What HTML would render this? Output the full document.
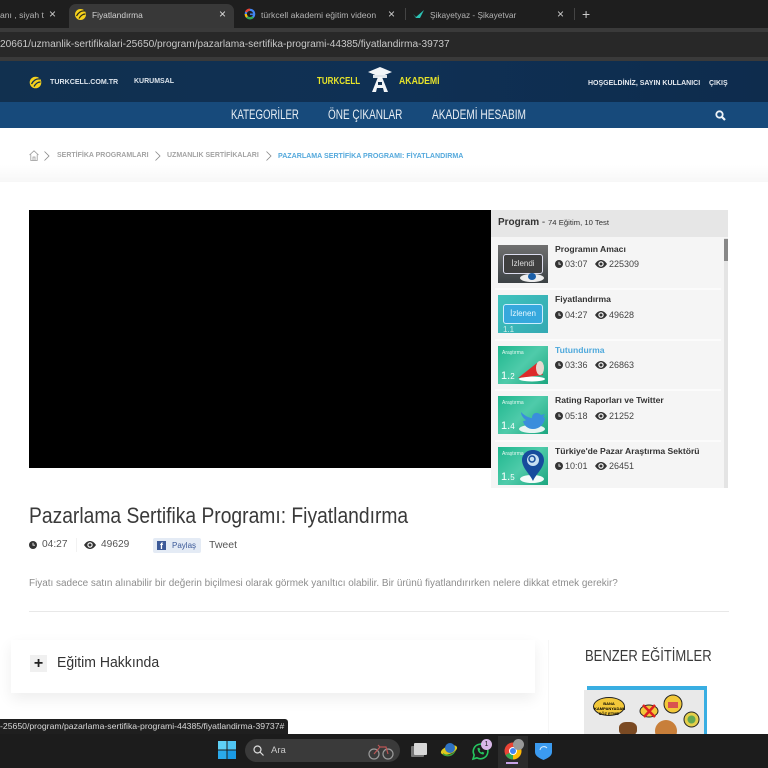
<!DOCTYPE html>
<html lang="tr"><head><meta charset="utf-8"><title>Fiyatlandırma</title>
<style>
html,body{margin:0;padding:0;background:#fff}
body{width:768px;height:768px;overflow:hidden;position:relative;font-family:"Liberation Sans",sans-serif}
.a{position:absolute;white-space:nowrap}
svg{position:absolute;overflow:visible}
.t{font-size:8.6px;color:#333;font-weight:bold;left:555px}
.m{font-size:9px;color:#444}
.th{position:absolute;left:498px;width:50px;height:38px;overflow:hidden}
</style></head><body>

<!-- browser tabs -->
<div class="a" style="left:0;top:0;width:768px;height:28px;background:#1e1e1e"></div>
<div class="a" style="left:69px;top:4px;width:165px;height:24px;background:#383838;border-radius:7px 7px 0 0"></div>
<div class="a" style="left:0;top:28px;width:768px;height:4px;background:#3a3a3a"></div>
<div class="a" style="left:0;top:32px;width:768px;height:25px;background:#282828"></div>
<div class="a" style="left:0;top:57px;width:768px;height:4px;background:#3a3a3a"></div>
<div class="a" style="left:0;top:10px;font-size:8.6px;color:#b4b4b4">anı , siyah t</div>
<div class="a" style="left:49px;top:7px;font-size:12px;color:#ccc">×</div>
<svg style="left:74px;top:8px" width="13" height="13" viewBox="0 0 13 13"><circle cx="6.5" cy="6.5" r="5.5" fill="#f6d21c"/><path d="M2.5 8 C5 3.5 8 2.5 11 3 M5 10.500 C7 7 9 6 11.500 6" stroke="#29281a" stroke-width="1.2" fill="none"/></svg>
<div class="a" style="left:92px;top:10px;font-size:8.4px;color:#d2d2d2">Fiyatlandırma</div>
<div class="a" style="left:219px;top:7px;font-size:12px;color:#ddd">×</div>
<svg style="left:244px;top:8px" width="12" height="12" viewBox="0 0 12 12"><circle cx="6" cy="6" r="4.2" fill="none" stroke="#4285f4" stroke-width="2.2"/><path d="M6 1.800A4.200 4.200 0 0 0 2 4" stroke="#ea4335" stroke-width="2.2" fill="none"/><path d="M1.800 6A4.200 4.200 0 0 0 3 9" stroke="#fbbc05" stroke-width="2.2" fill="none"/><path d="M3 9A4.200 4.200 0 0 0 9 9" stroke="#34a853" stroke-width="2.2" fill="none"/><path d="M6 5.500h5v1.400H6z" fill="#4285f4"/></svg>
<div class="a" style="left:261px;top:10px;font-size:8.6px;color:#b4b4b4">türkcell akademi eğitim videon</div>
<div class="a" style="left:388px;top:7px;font-size:12px;color:#ccc">×</div>
<div class="a" style="left:405px;top:8px;width:1px;height:12px;background:#444"></div>
<svg style="left:412px;top:9px" width="13" height="10" viewBox="0 0 13 10"><path d="M1 5l3 3 8-7-4 8H4z" fill="#2cc3b5"/></svg>
<div class="a" style="left:430px;top:10px;font-size:8.3px;color:#b4b4b4">Şikayetyaz - Şikayetvar</div>
<div class="a" style="left:557px;top:7px;font-size:12px;color:#ccc">×</div>
<div class="a" style="left:574px;top:8px;width:1px;height:12px;background:#444"></div>
<div class="a" style="left:582px;top:6px;font-size:14px;color:#ccc">+</div>
<div class="a" style="left:0;top:39px;font-size:10.15px;color:#c8c8c8">20661/uzmanlik-sertifikalari-25650/program/pazarlama-sertifika-programi-44385/fiyatlandirma-39737</div>

<!-- header -->
<div class="a" style="left:0;top:61px;width:768px;height:42px;background:linear-gradient(90deg,#11304f,#0f3054 50%,#0e2c4d)"></div>
<div class="a" style="left:0;top:102px;width:768px;height:26px;background:#174a7b"></div>
<svg style="left:29px;top:76px" width="13" height="13" viewBox="0 0 13 13"><circle cx="6.5" cy="6.5" r="5.800" fill="#f6d21c"/><path d="M2.5 8 C5 3.5 8 2.5 11 3 M5 10.500 C7 7 9 6 11.500 6" stroke="#122f4e" stroke-width="1.3" fill="none"/></svg>
<div class="a" style="left:50px;top:78px;font-size:7.1px;font-weight:bold;color:#dce4ec">TURKCELL.COM.TR</div>
<div class="a" style="left:134px;top:78px;font-size:7px;font-weight:bold;color:#dce4ec">KURUMSAL</div>
<div class="a" style="left:317px;top:76px;font-size:10px;font-weight:bold;color:#e6e32a;transform:scaleX(.8);transform-origin:0 0">TURKCELL</div>
<svg style="left:368px;top:67px" width="24" height="25" viewBox="0 0 24 25"><path d="M0 5 12 0l12 5-12 5z" fill="#f2f5f8"/><path d="M5 8h14v3H5z" fill="#dfe5eb"/><path d="M10 10h4l6 15h-4l-1-4H9l-1 4H4z" fill="#f2f5f8"/><rect x="10" y="15" width="4" height="3" fill="#11304f"/></svg>
<div class="a" style="left:399px;top:76px;font-size:10px;font-weight:bold;color:#e6e32a;transform:scaleX(.87);transform-origin:0 0">AKADEMİ</div>
<div class="a" style="left:588px;top:80px;font-size:7px;font-weight:bold;color:#e4e9ef">HOŞGELDİNİZ, SAYIN KULLANICI</div>
<div class="a" style="left:709px;top:80px;font-size:7px;font-weight:bold;color:#e4e9ef">ÇIKIŞ</div>
<div class="a" style="left:231px;top:107px;font-size:13.5px;color:#e8eef4;transform:scaleX(.714);transform-origin:0 0">KATEGORİLER</div>
<div class="a" style="left:328px;top:107px;font-size:13.5px;color:#e8eef4;transform:scaleX(.74);transform-origin:0 0">ÖNE ÇIKANLAR</div>
<div class="a" style="left:432px;top:107px;font-size:13.5px;color:#e8eef4;transform:scaleX(.75);transform-origin:0 0">AKADEMİ HESABIM</div>
<svg style="left:715px;top:110px" width="11" height="11" viewBox="0 0 11 11"><circle cx="4.500" cy="4.500" r="3.200" fill="none" stroke="#eef3f7" stroke-width="1.800"/><path d="M7 7l3 3" stroke="#eef3f7" stroke-width="2.200"/></svg>

<!-- breadcrumb -->
<div class="a" style="left:0;top:165px;width:768px;height:17px;background:linear-gradient(#fff,#f7f7f7)"></div>
<svg style="left:29px;top:150px" width="10" height="11" viewBox="0 0 10 11"><path d="M.5 5 5 .8 9.500 5M1.800 4.500v6h6.400v-6M4 10.500V7h2v3.500" fill="none" stroke="#999" stroke-width=".8"/></svg>
<svg style="left:44px;top:151px" width="6" height="10" viewBox="0 0 6 10"><path d="M.5.5 5 5 .5 9.500" fill="none" stroke="#888" stroke-width=".8"/></svg>
<div class="a" style="left:57px;top:152px;font-size:7px;font-weight:bold;color:#a3a3a3">SERTİFİKA PROGRAMLARI</div>
<svg style="left:155px;top:151px" width="6" height="10" viewBox="0 0 6 10"><path d="M.5.5 5 5 .5 9.500" fill="none" stroke="#888" stroke-width=".8"/></svg>
<div class="a" style="left:167px;top:152px;font-size:7px;font-weight:bold;color:#a3a3a3">UZMANLIK SERTİFİKALARI</div>
<svg style="left:266px;top:151px" width="6" height="10" viewBox="0 0 6 10"><path d="M.5.5 5 5 .5 9.500" fill="none" stroke="#888" stroke-width=".8"/></svg>
<div class="a" style="left:278px;top:152px;font-size:7.08px;font-weight:bold;color:#55a9dc">PAZARLAMA SERTİFİKA PROGRAMI: FİYATLANDIRMA</div>

<!-- video -->
<div class="a" style="left:29px;top:210px;width:462px;height:258px;background:#000"></div>

<!-- program panel -->
<div class="a" style="left:491px;top:210px;width:237px;height:278px;background:#f5f5f5"></div>
<div class="a" style="left:491px;top:210px;width:237px;height:27px;background:#e6e6e6"></div>
<div class="a" style="left:498px;top:217px;font-size:10px;color:#333"><b>Program</b> <span style="font-size:10px">-</span> <span style="font-size:7.7px">74 Eğitim, 10 Test</span></div>
<div class="a" style="left:724px;top:238px;width:4px;height:250px;background:#e4e4e4"></div>
<div class="a" style="left:724px;top:239px;width:4px;height:22px;background:#888"></div>
<div class="a" style="left:495px;top:288px;width:226px;height:2px;background:#fbfbfb"></div>
<div class="a" style="left:495px;top:339px;width:226px;height:2px;background:#fbfbfb"></div>
<div class="a" style="left:495px;top:389px;width:226px;height:2px;background:#fbfbfb"></div>
<div class="a" style="left:495px;top:440px;width:226px;height:2px;background:#fbfbfb"></div>

<div class="th" style="top:245px;background:linear-gradient(#707070,#3c4245)"><div class="a" style="left:5px;top:9px;width:38px;height:18px;border:1.500px solid #dde;border-radius:3px;background:#3f3f3f;color:#ddd;font-size:8px;text-align:center;line-height:18px">İzlendi</div><div class="a" style="left:22px;top:29px;width:24px;height:8px;background:#eee;border-radius:50%"></div><div class="a" style="left:30px;top:28px;width:8px;height:7px;background:#1b5fa8;border-radius:50%"></div></div>
<div class="th" style="top:295px;background:linear-gradient(135deg,#3fc3bd,#34a9b3)"><div class="a" style="left:5px;top:9px;width:38px;height:18px;border:1.500px solid #cef;border-radius:3px;background:#36a8dd;color:#e8f8ff;font-size:8px;text-align:center;line-height:18px">İzlenen</div><div class="a" style="left:5px;top:30px;font-size:8px;color:#cfeee9">1.1</div></div>
<div class="th" style="top:346px;background:linear-gradient(135deg,#1fb78e,#4fcbaa 50%,#1ca67f)"><div class="a" style="left:4px;top:4px;font-size:5px;color:#e8f8f2">Araştırma</div><div class="a" style="left:3px;top:24px;font-size:11px;color:#fff">1.<span style="font-size:8px">2</span></div><svg style="left:20px;top:12px" width="28" height="24" viewBox="0 0 28 24"><ellipse cx="14" cy="21" rx="13" ry="2.500" fill="#fff"/><path d="M0 20 19 5l6 12z" fill="#dd2b2b"/><ellipse cx="22" cy="10" rx="4" ry="7" fill="#e8d8d0"/></svg></div>
<div class="th" style="top:396px;background:linear-gradient(135deg,#1fb78e,#4fcbaa 50%,#1ca67f)"><div class="a" style="left:4px;top:4px;font-size:5px;color:#e8f8f2">Araştırma</div><div class="a" style="left:3px;top:24px;font-size:11px;color:#fff">1.<span style="font-size:8px">4</span></div><svg style="left:20px;top:13px" width="28" height="25" viewBox="0 0 28 25"><ellipse cx="14" cy="20" rx="13" ry="4" fill="#e8f5f2"/><path d="M3 3c5 5 9 6 11 6 0-5 5-7 9-3l4-1-2 3 2 1c-1 7-6 11-12 11-5 0-9-3-10-8 1 0 2 0 3-1-3-2-5-5-5-8z" fill="#3a8edc"/></svg></div>
<div class="th" style="top:447px;background:linear-gradient(135deg,#1fb78e,#4fcbaa 50%,#1ca67f)"><div class="a" style="left:4px;top:4px;font-size:5px;color:#e8f8f2">Araştırma</div><div class="a" style="left:3px;top:24px;font-size:11px;color:#fff">1.<span style="font-size:8px">5</span></div><svg style="left:20px;top:2px" width="28" height="36" viewBox="0 0 28 36"><ellipse cx="14" cy="30" rx="12" ry="4" fill="#f3fbf9"/><path d="M15 1c7 0 11 5 11 10 0 8-8 14-11 21-3-7-11-13-11-21C4 6 8 1 15 1z" fill="#164b9c"/><circle cx="15" cy="11" r="6" fill="#c7dff2"/><circle cx="14" cy="10" r="3" fill="none" stroke="#164b9c" stroke-width="1.500"/></svg></div>

<div class="a t" style="top:244px">Programın Amacı</div>
<div class="a t" style="top:294px">Fiyatlandırma</div>
<div class="a t" style="top:345px;color:#4fa9dc">Tutundurma</div>
<div class="a t" style="top:395px">Rating Raporları ve Twitter</div>
<div class="a t" style="top:446px">Türkiye'de Pazar Araştırma Sektörü</div>

<svg width="0" height="0"><defs>
<symbol id="c" viewBox="0 0 8 8"><circle cx="4" cy="4" r="4" fill="#333"/><path d="M4 1.800V4.200h2" stroke="#eee" stroke-width=".9" fill="none"/></symbol>
<symbol id="e" viewBox="0 0 12 8"><path d="M0 4C2 1 4 0 6 0s4 1 6 4c-2 3-4 4-6 4S2 7 0 4z" fill="#333"/><circle cx="6" cy="4" r="2.700" fill="#f5f5f5"/><circle cx="6" cy="4" r="1.500" fill="#333"/></symbol>
</defs></svg>

<svg style="left:555px;top:260px" width="8" height="8"><use href="#c"/></svg><div class="a m" style="left:565px;top:259px">03:07</div><svg style="left:595px;top:260px" width="12" height="8"><use href="#e"/></svg><div class="a m" style="left:609px;top:259px">225309</div>
<svg style="left:555px;top:311px" width="8" height="8"><use href="#c"/></svg><div class="a m" style="left:565px;top:310px">04:27</div><svg style="left:595px;top:311px" width="12" height="8"><use href="#e"/></svg><div class="a m" style="left:609px;top:310px">49628</div>
<svg style="left:555px;top:361px" width="8" height="8"><use href="#c"/></svg><div class="a m" style="left:565px;top:360px">03:36</div><svg style="left:595px;top:361px" width="12" height="8"><use href="#e"/></svg><div class="a m" style="left:609px;top:360px">26863</div>
<svg style="left:555px;top:412px" width="8" height="8"><use href="#c"/></svg><div class="a m" style="left:565px;top:411px">05:18</div><svg style="left:595px;top:412px" width="12" height="8"><use href="#e"/></svg><div class="a m" style="left:609px;top:411px">21252</div>
<svg style="left:555px;top:462px" width="8" height="8"><use href="#c"/></svg><div class="a m" style="left:565px;top:461px">10:01</div><svg style="left:595px;top:462px" width="12" height="8"><use href="#e"/></svg><div class="a m" style="left:609px;top:461px">26451</div>

<!-- title -->
<div class="a" style="left:29px;top:503px;font-size:22px;color:#3a3a3a;transform:scaleX(.876);transform-origin:0 0">Pazarlama Sertifika Programı: Fiyatlandırma</div>
<svg style="left:29px;top:541px" width="8" height="8"><use href="#c"/></svg>
<div class="a" style="left:42px;top:539px;font-size:10.2px;color:#555">04:27</div>
<div class="a" style="left:76px;top:538px;width:1px;height:14px;background:#f2f2f2"></div>
<svg style="left:84px;top:541px" width="12" height="8"><use href="#e"/></svg>
<div class="a" style="left:101px;top:539px;font-size:10.2px;color:#555">49629</div>
<div class="a" style="left:153px;top:538px;width:48px;height:15px;background:#e4ebf5;border-radius:2px"></div>
<div class="a" style="left:157px;top:541px;width:9px;height:9px;background:#3b5998;color:#fff;font-size:9px;font-weight:bold;line-height:10px;text-align:center;overflow:hidden">f</div>
<div class="a" style="left:172px;top:541px;font-size:8px;color:#3b5998">Paylaş</div>
<div class="a" style="left:209px;top:539px;font-size:10.500px;color:#555">Tweet</div>
<div class="a" style="left:29px;top:578px;font-size:9.95px;color:#8d8d8d">Fiyatı sadece satın alınabilir bir değerin biçilmesi olarak görmek yanıltıcı olabilir. Bir ürünü fiyatlandırırken nelere dikkat etmek gerekir?</div>
<div class="a" style="left:29px;top:611px;width:700px;height:1px;background:#e8e8e8"></div>

<!-- about box -->
<div class="a" style="left:11px;top:640px;width:524px;height:53px;background:#fff;box-shadow:0 6px 14px rgba(0,0,0,.07)"></div>
<div class="a" style="left:30px;top:655px;width:17px;height:17px;background:#f0f0f0;color:#222;font-size:16px;font-weight:bold;line-height:17px;text-align:center">+</div>
<div class="a" style="left:57px;top:654px;font-size:15px;color:#333;transform:scaleX(.935);transform-origin:0 0">Eğitim Hakkında</div>
<div class="a" style="left:548px;top:640px;width:1px;height:94px;background:#f6f6f6"></div>
<div class="a" style="left:585px;top:648px;font-size:15.500px;color:#3a3a3a;transform:scaleX(.84);transform-origin:0 0">BENZER EĞİTİMLER</div>

<!-- similar thumb -->
<div class="a" style="left:587px;top:686px;width:120px;height:48px;background:#39aee2"></div>
<div class="a" style="left:584px;top:690px;width:120px;height:44px;background:#e9e9e9;overflow:hidden">
<div class="a" style="left:9px;top:7px;width:32px;height:19px;background:#f2c83a;border:1px solid #222;border-radius:50%;font-size:4px;font-weight:bold;text-align:center;line-height:5px;padding-top:3px;box-sizing:border-box">BANA<br>KAMPANYADAN<br>SÖZ ETME</div>
<svg style="left:55px;top:14px" width="20" height="14" viewBox="0 0 20 14"><ellipse cx="10" cy="7" rx="9" ry="6" fill="#f2c83a" stroke="#222"/><path d="M4 1l12 12M16 1 5 13" stroke="#d22" stroke-width="2.500"/></svg>
<svg style="left:79px;top:4px" width="20" height="20" viewBox="0 0 20 20"><circle cx="10" cy="10" r="9" fill="#f2c83a" stroke="#222"/><rect x="5" y="8" width="10" height="6" fill="#d9534f"/></svg>
<svg style="left:99px;top:21px" width="17" height="17" viewBox="0 0 17 17"><circle cx="8.500" cy="8.500" r="7.500" fill="#e4cf4a" stroke="#222"/><circle cx="8.500" cy="8.500" r="4" fill="#62a852"/></svg>
<div class="a" style="left:35px;top:32px;width:18px;height:14px;background:#7a4a23;border-radius:40%"></div>
<div class="a" style="left:71px;top:30px;width:22px;height:22px;background:#c87f3a;border-radius:50%"></div>
</div>

<!-- status bubble -->
<div class="a" style="left:0;top:719px;width:288px;height:15px;background:#1f1f1f;border-radius:0 3px 0 0"></div>
<div class="a" style="left:0;top:721px;font-size:8.66px;color:#d8d8d8">-25650/program/pazarlama-sertifika-programi-44385/fiyatlandirma-39737#</div>

<!-- taskbar -->
<div class="a" style="left:0;top:734px;width:768px;height:34px;background:#1c1c1c"></div>
<svg style="left:218px;top:741px" width="18" height="18" viewBox="0 0 18 18"><rect width="8.500" height="8.500" fill="#5fd0f5"/><rect x="9.500" width="8.500" height="8.500" fill="#4fc5f3"/><rect y="9.500" width="8.500" height="8.500" fill="#2aa9ea"/><rect x="9.500" y="9.500" width="8.500" height="8.500" fill="#1a9ae5"/></svg>
<div class="a" style="left:245px;top:739px;width:155px;height:23px;border-radius:12px;background:#3a3a3a"></div>
<svg style="left:253px;top:745px" width="11" height="11" viewBox="0 0 11 11"><circle cx="4.500" cy="4.500" r="3.500" fill="none" stroke="#ddd" stroke-width="1.200"/><path d="M7 7l3.500 3.500" stroke="#ddd" stroke-width="1.200"/></svg>
<div class="a" style="left:271px;top:745px;font-size:9.500px;color:#c8c8c8">Ara</div>
<svg style="left:367px;top:742px" width="28" height="18" viewBox="0 0 28 18"><circle cx="7" cy="12" r="5" fill="none" stroke="#9a9a9a" stroke-width="1.200"/><circle cx="21" cy="12" r="5" fill="none" stroke="#9a9a9a" stroke-width="1.200"/><path d="M7 12l6-7h6l2 7M13 5l-2-2" stroke="#b55" stroke-width="1.200" fill="none"/></svg>
<div class="a" style="left:411px;top:746px;width:13px;height:11px;background:#777;border-radius:1px"></div>
<div class="a" style="left:414px;top:743px;width:13px;height:12px;background:#d8d8d8;border-radius:1px"></div>
<svg style="left:440px;top:741px" width="18" height="18" viewBox="0 0 18 18"><ellipse cx="9" cy="9" rx="8.500" ry="4" fill="#e0c81e" transform="rotate(-20 9 9)"/><circle cx="10" cy="7" r="5" fill="#2f72c2"/><path d="M3 12c4 3 9 2 13-3-2 6-8 8-13 5z" fill="#3fa03b"/></svg>
<svg style="left:472px;top:743px" width="17" height="17" viewBox="0 0 17 17"><path d="M1 16l1.200-4A7.300 7.300 0 1 1 5 14.800z" fill="none" stroke="#25c55f" stroke-width="1.600"/><path d="M5.500 5c0 4 3 6.500 6 6.500l.8-1.800-2-1-.8.800c-1-.5-1.500-1-2-2l.8-.8-1-2z" fill="#25c55f"/></svg>
<div class="a" style="left:481px;top:739px;width:11px;height:11px;background:#d9b8e8;border-radius:50%;font-size:7px;color:#222;text-align:center;line-height:11px">1</div>
<div class="a" style="left:498px;top:736px;width:30px;height:32px;background:#2b2b2b"></div>
<svg style="left:504px;top:742px" width="18" height="18" viewBox="0 0 18 18"><circle cx="9" cy="9" r="8.500" fill="#ea4335"/><path d="M9 9 1.600 13A8.500 8.500 0 0 0 9 17.500z" fill="#34a853"/><path d="M9 9l7.500-4A8.500 8.500 0 0 1 9 17.500z" fill="#fbbc05"/><circle cx="9" cy="9" r="4" fill="#fff"/><circle cx="9" cy="9" r="3" fill="#4285f4"/></svg>
<div class="a" style="left:513px;top:739px;width:11px;height:11px;background:#999;border-radius:50%"></div>
<div class="a" style="left:506px;top:762px;width:12px;height:2px;background:#c6a2e6"></div>
<svg style="left:535px;top:742px" width="17" height="18" viewBox="0 0 17 18"><path d="M0 1h17v9c0 4-4 6-8.500 8C4 16 0 14 0 10z" fill="#3b9bf0"/><path d="M5 8a4 4 0 0 1 7-2" stroke="#cfe9ff" stroke-width="1" fill="none"/></svg>
</body></html>
